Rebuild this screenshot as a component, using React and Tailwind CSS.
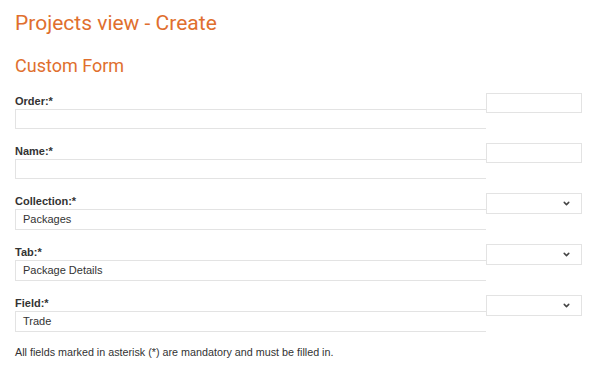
import { ChevronDown } from 'lucide-react';

const fields = [
  { label: 'Order:*', value: '', select: false },
  { label: 'Name:*', value: '', select: false },
  { label: 'Collection:*', value: 'Packages', select: true },
  { label: 'Tab:*', value: 'Package Details', select: true },
  { label: 'Field:*', value: 'Trade', select: true },
];

function FormField({ label, value, select }) {
  return (
    <div className="mb-[14px]">
      {/* label row with the floated box on the right */}
      <div className="flex items-start h-[16px]">
        <label className="flex-1 pt-[2px] text-[11px] leading-[13px] font-bold text-[#333]">{label}</label>
        <div
          className={`w-[96px] shrink-0 bg-white border border-[#e3e3e3] flex items-center justify-end pr-[10px] ${
            select ? 'h-[21px]' : 'h-[20px]'
          }`}
        >
          {select && <ChevronDown size={9} strokeWidth={4} className="text-[#444]" />}
        </div>
      </div>
      <div
        className={`w-[471px] border-l border-t border-b border-[#e3e3e3] px-[7px] flex items-center text-[11px] text-[#333] ${
          select ? 'h-[21px]' : 'h-[20px]'
        }`}
      >
        {value}
      </div>
    </div>
  );
}

export default function App() {
  return (
    <div className="w-[593px] h-[386px] bg-white pl-[15px] pr-[11px] pt-[11px] font-['Liberation_Sans',Arial,sans-serif]">
      <h1 className="font-['Roboto',sans-serif] text-[21px] leading-[24px] text-[#e06f2e]">Projects view - Create</h1>
      <h2 className="mt-[20px] font-['Roboto',sans-serif] text-[18px] leading-[22px] text-[#e06f2e]">Custom Form</h2>
      <div className="mt-[16px]">
        {fields.map((f) => (
          <FormField key={f.label} {...f} />
        ))}
      </div>
      <p className="mt-[8px] text-[10.75px] leading-[13px] text-[#333]">
        All fields marked in asterisk (*) are mandatory and must be filled in.
      </p>
    </div>
  );
}
